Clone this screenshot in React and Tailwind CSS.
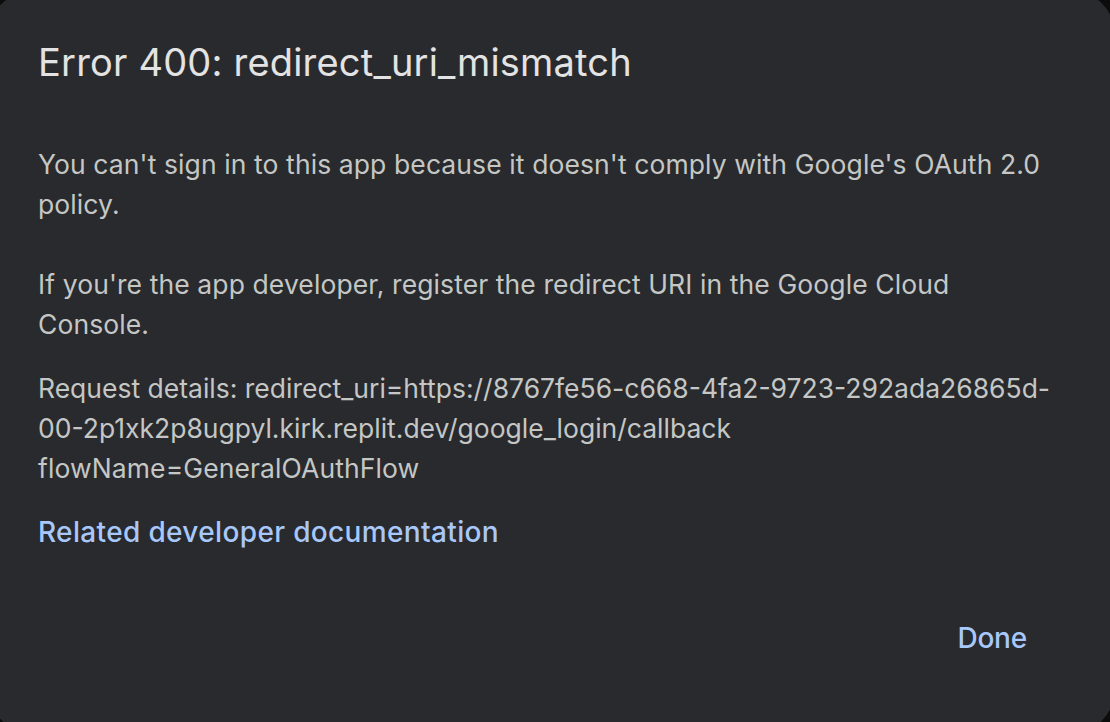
export default function App() {
  return (
    <div className="h-[722px] w-[1110px] overflow-hidden bg-[#0c0c0c]" style={{ fontFamily: 'Inter, "Noto Sans", sans-serif' }}>
      <div className="ml-[-10px] mt-[-8px] h-[740px] w-[1124px] rounded-[40px] bg-[#292a2d] pl-[48px] pr-[64px] pt-[46px]">
        <h1 className="text-[38px] leading-[48px] tracking-[0.2px] text-[#e3e3e3]">Error 400: redirect_uri_mismatch</h1>

        <div className="mt-[58px] text-[26.5px] leading-[40px] tracking-[0.1px] text-[#c4c7c5]">
          <p>You can't sign in to this app because it doesn't comply with Google's OAuth 2.0 policy.</p>
          <p className="mt-[40px]">If you're the app developer, register the redirect URI in the Google Cloud Console.</p>
          <p className="mt-[24px] whitespace-nowrap tracking-normal">
            Request details: redirect_uri=https://8767fe56-c668-4fa2-9723-292ada26865d-
            <br />
            00-2p1xk2p8ugpyl.kirk.replit.dev/google_login/callback
          </p>
          <p>flowName=GeneralOAuthFlow</p>
        </div>

        <a className="mt-[24px] block text-[28px] leading-[40px] font-medium tracking-[0.35px] text-[#a8c7fa]">Related developer documentation</a>

        <div className="mt-[66px] flex justify-end pr-[23px]">
          <button className="text-[28px] leading-[40px] font-medium tracking-[-0.2px] text-[#a8c7fa]">Done</button>
        </div>
      </div>
    </div>
  );
}
